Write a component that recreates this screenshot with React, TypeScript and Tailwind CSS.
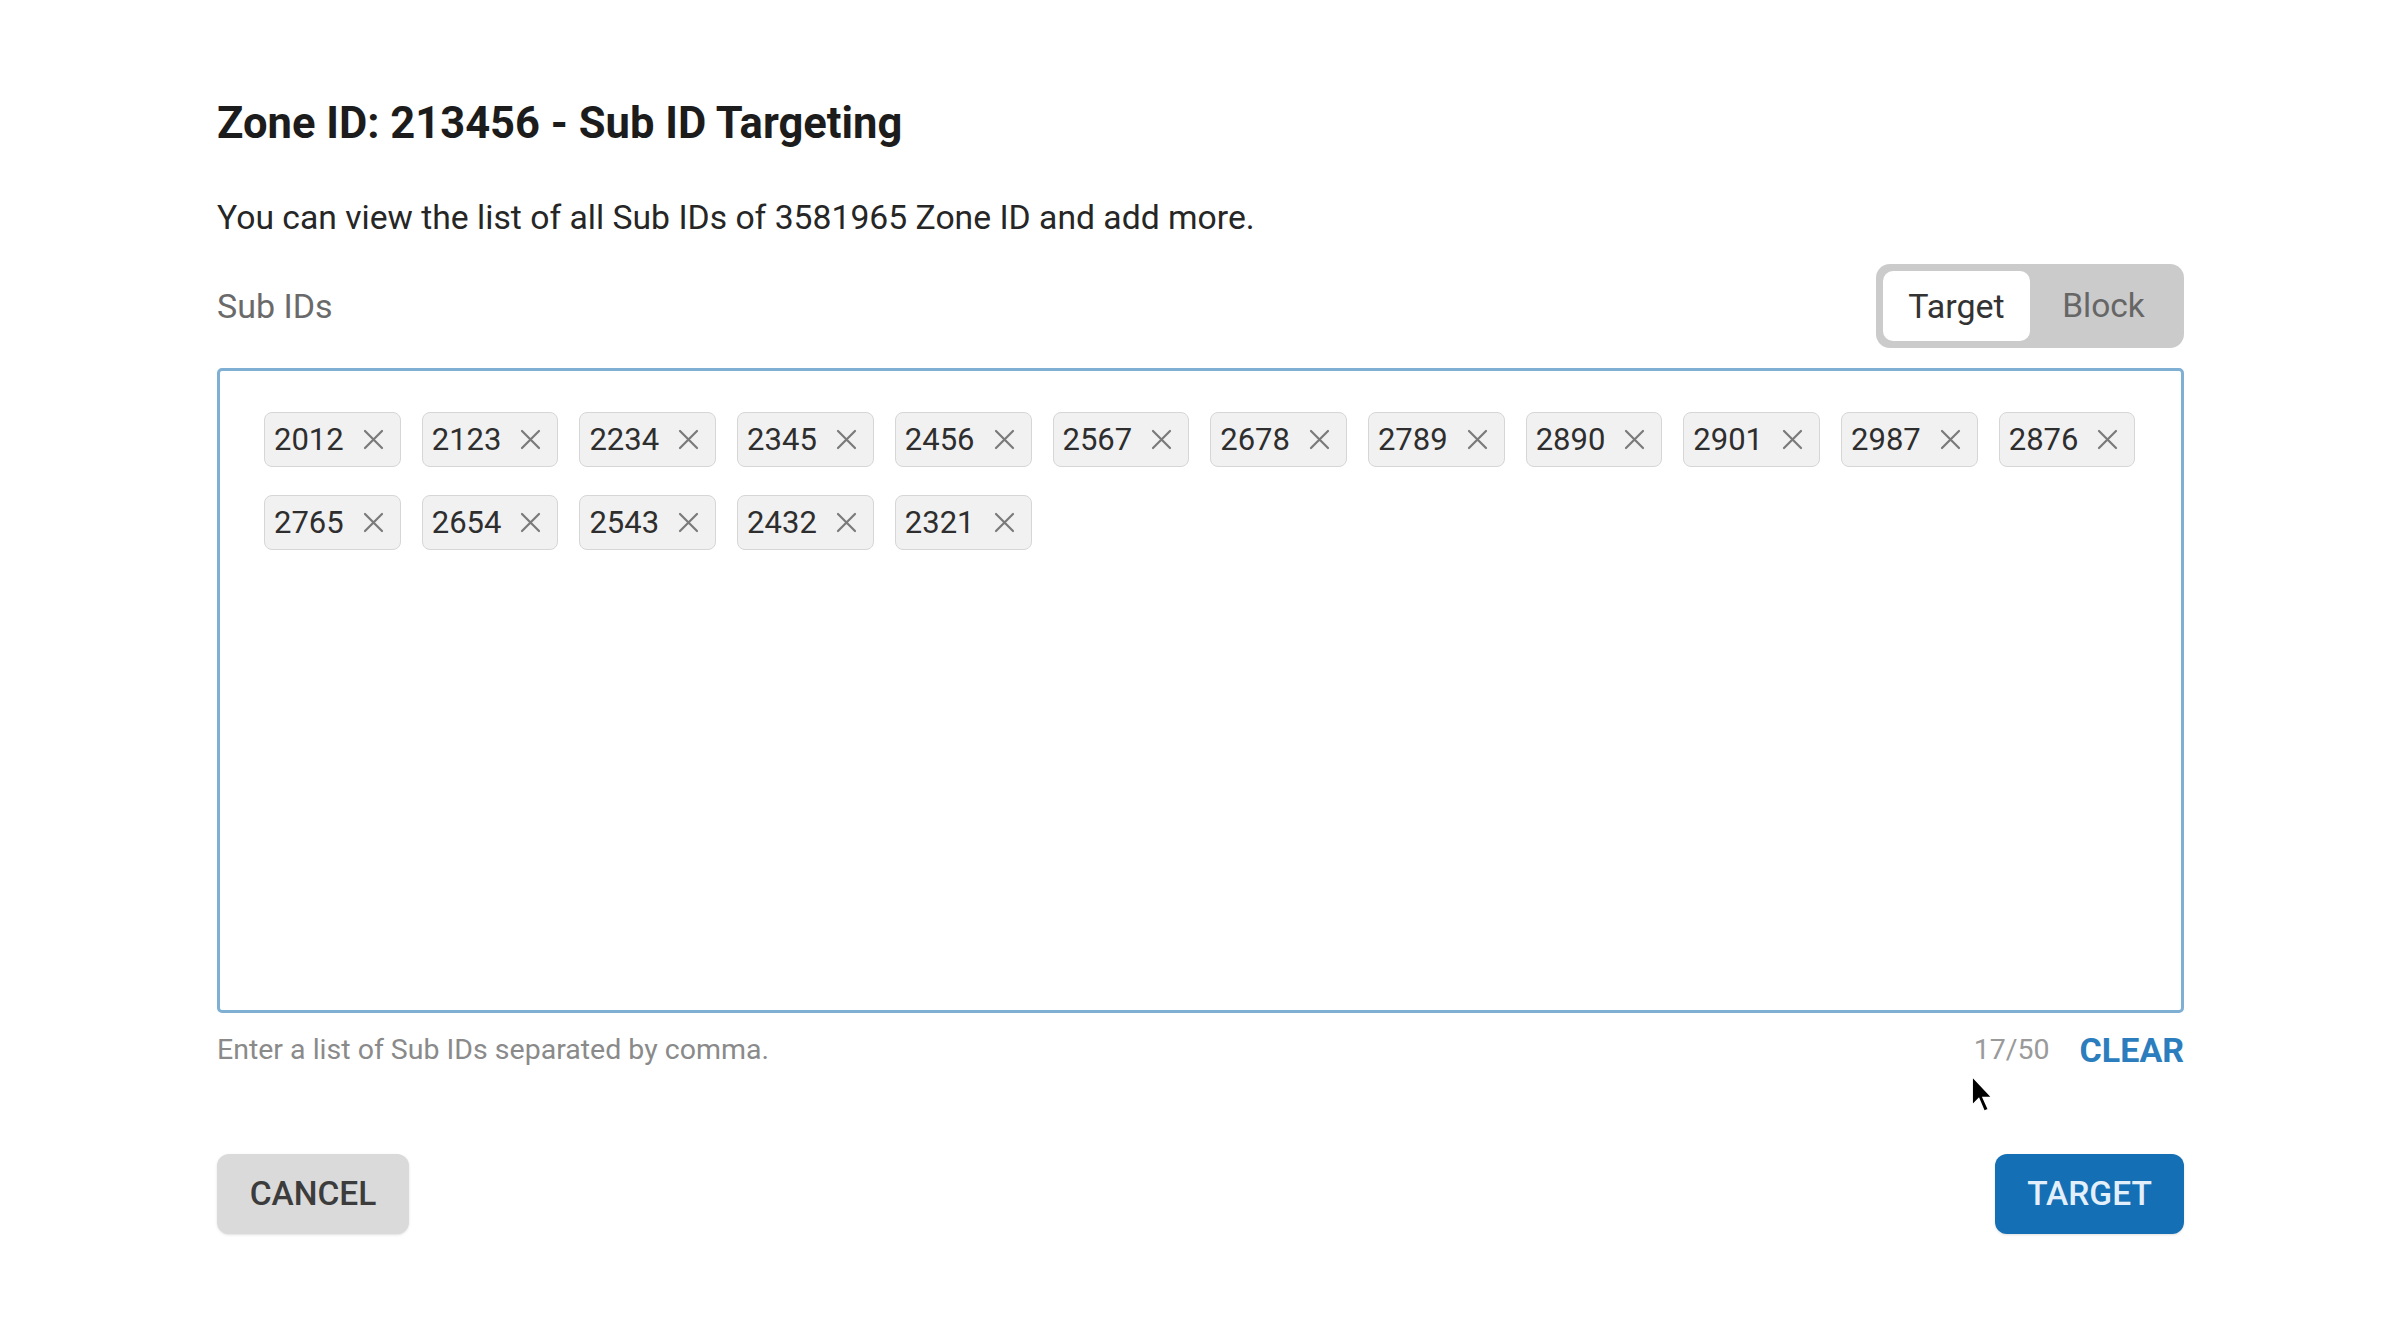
import React from "react";

const subIds = [
  "2012", "2123", "2234", "2345", "2456", "2567", "2678", "2789", "2890", "2901", "2987", "2876",
  "2765", "2654", "2543", "2432", "2321",
];

function CloseIcon() {
  return (
    <svg width="21" height="21" viewBox="0 0 21 21" fill="none">
      <path d="M2 2L19 19M19 2L2 19" stroke="#7a7a7a" strokeWidth="2.2" strokeLinecap="round" />
    </svg>
  );
}

function Chip({ id }: { id: string }) {
  return (
    <div className="flex h-[55px] items-center gap-[19px] rounded-[8px] border border-[#d6d6d6] bg-[#f1f1f1] pl-[9px] pr-[16px]">
      <span className="text-[31px] leading-none text-[#2e2e2e]">{id}</span>
      <CloseIcon />
    </div>
  );
}

export default function App() {
  return (
    <div
      className="relative h-[1318px] w-full bg-white pl-[217px] pr-[208px] pt-[98px]"
      style={{ fontFamily: "Roboto, 'Liberation Sans', sans-serif" }}
    >
      <h1 className="text-[43.5px] font-bold leading-[52px] text-[#1c1c1c]">
        Zone ID: 213456 - Sub ID Targeting
      </h1>
      <p className="mt-[48px] text-[33.7px] leading-[40px] text-[#262626]">
        You can view the list of all Sub IDs of 3581965 Zone ID and add more.
      </p>

      <div className="mt-[26px] flex h-[84px] items-center justify-between">
        <span className="text-[34px] text-[#6a6a6a]">Sub IDs</span>
        <div className="flex h-[84px] w-[308px] items-center rounded-[14px] bg-[#cbcbcb] p-[7px]">
          <div className="flex h-[70px] w-[147px] items-center justify-center rounded-[10px] bg-white text-[34px] text-[#333]">
            Target
          </div>
          <div className="flex flex-1 items-center justify-center text-[33.5px] text-[#666]">Block</div>
        </div>
      </div>

      <div className="mt-[20px] h-[645px] rounded-[5px] border-[3px] border-[#80afd4] pl-[44px] pr-[30px] pt-[41px]">
        <div className="flex flex-wrap gap-x-[21px] gap-y-[28px]">
          {subIds.map((id) => (
            <Chip key={id} id={id} />
          ))}
        </div>
      </div>

      <div className="mt-[19px] flex h-[36px] items-center justify-between">
        <span className="text-[28.5px] text-[#8a8a8a]">Enter a list of Sub IDs separated by comma.</span>
        <div className="flex items-center gap-[30px]">
          <span className="text-[28.5px] text-[#9a9a9a]">17/50</span>
          <span className="text-[34px] font-bold text-[#2c7dbd]">CLEAR</span>
        </div>
      </div>

      <div className="mt-[86px] flex items-center justify-between">
        <button className="flex h-[80px] w-[192px] items-center justify-center rounded-[12px] bg-[#dadada] text-[33.5px] font-medium text-[#3c3c3c] shadow-sm">
          CANCEL
        </button>
        <button className="flex h-[80px] w-[189px] items-center justify-center rounded-[12px] bg-[#146fb4] text-[33.5px] font-medium text-[#e3effa] shadow-sm">
          TARGET
        </button>
      </div>

      <svg
        className="absolute left-[1971px] top-[1075px]"
        width="24"
        height="40"
        viewBox="0 0 20 33"
        fill="none"
      >
        <path d="M1 1L1 25L6.5 19.5L11 30L14.5 28.5L10 18.5L17.5 18.5Z" fill="#000" stroke="#fff" strokeWidth="1.2" />
      </svg>
    </div>
  );
}
